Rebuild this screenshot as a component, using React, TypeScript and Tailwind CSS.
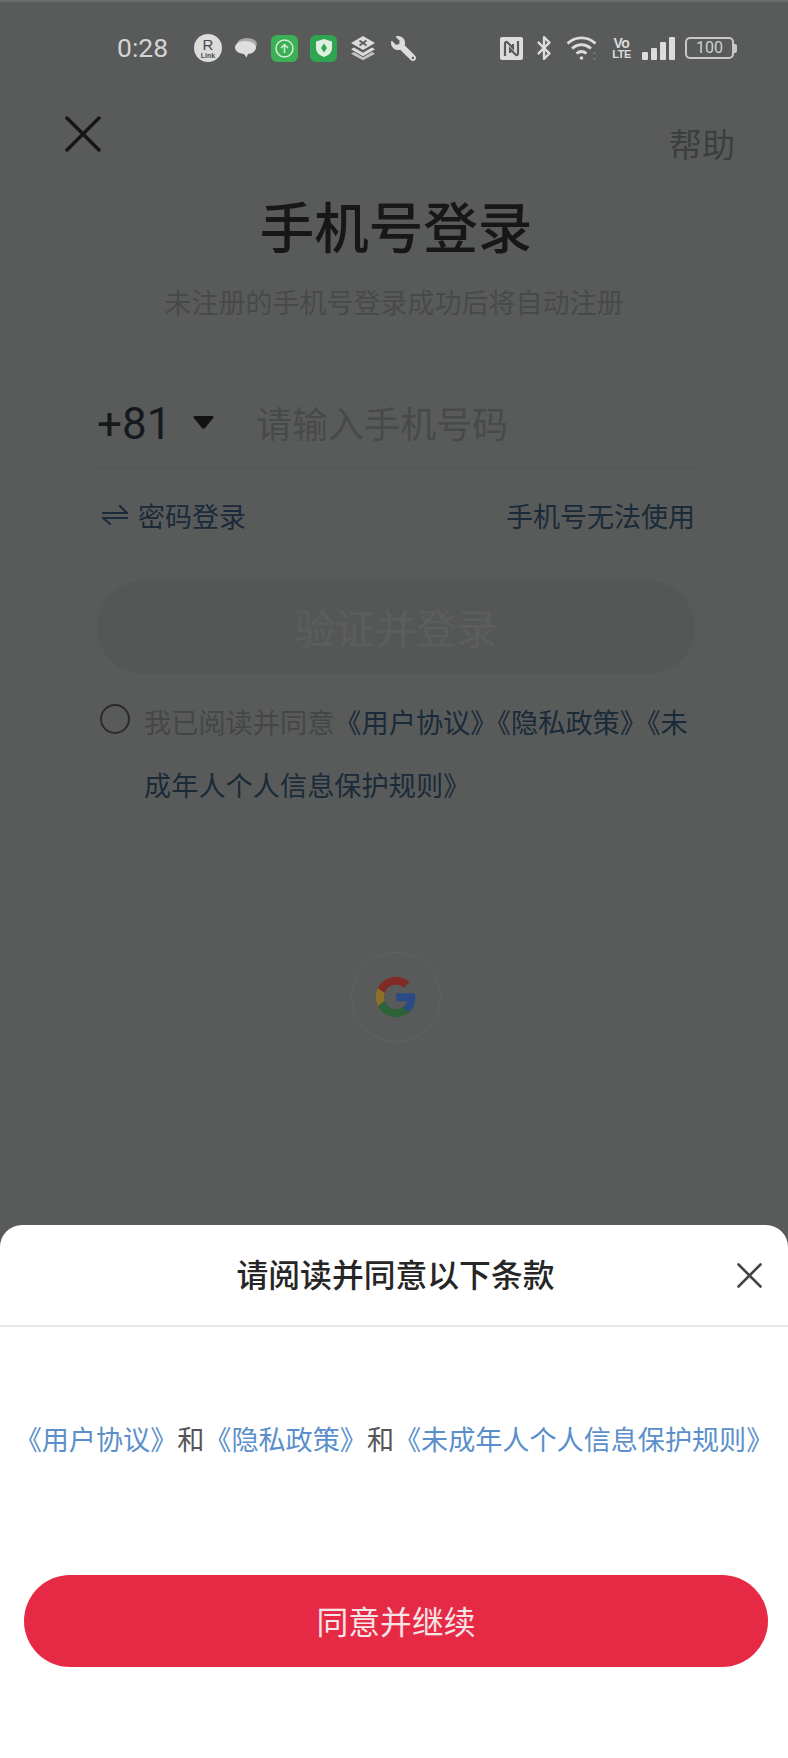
import React from 'react';
import { FaWrench } from 'react-icons/fa';
import { Bluetooth } from 'lucide-react';

const font = "font-['Noto_Sans_CJK_SC','Noto_Sans',sans-serif]";

function StatusLeft() {
  return (
    <div className="flex items-center">
      <span className="font-['Roboto',sans-serif] text-[26.500px] leading-none text-[#d4d4d4] w-[53px] ml-[117px]">0:28</span>
      <div className="relative w-[28px] h-[28px] ml-[24px] rounded-full bg-[#dcdcdc] flex flex-col items-center justify-center text-[#4a4a4a] font-['Liberation_Sans',sans-serif]">
        <span className="text-[15px] leading-[14px] font-normal">R</span>
        <span className="text-[7px] leading-[7px] font-bold">Link</span>
      </div>
      <svg className="ml-[12px]" width="24" height="22" viewBox="0 0 24 22">
        <ellipse cx="13" cy="7" rx="10" ry="6" fill="#a8a8a8" />
        <path d="M11 4c6 0 11 2.800 11 6.500S17.500 17 14 17l-1.500 3.500L10 17C5 16.500 1 14 1 10.500S5 4 11 4z" fill="#dedede" />
      </svg>
      <div className="w-[27px] h-[27px] ml-[13px] rounded-[6px] bg-[#3cb054] flex items-center justify-center">
        <svg width="19" height="19" viewBox="0 0 19 19" fill="none" stroke="#d5ecd9" strokeWidth="1.500">
          <circle cx="9.500" cy="9.500" r="8.500" />
          <path d="M9.500 14V5.500M6 9l3.500-3.500L13 9" />
        </svg>
      </div>
      <div className="w-[27px] h-[27px] ml-[12px] rounded-[6px] bg-[#2fa552] flex items-center justify-center">
        <svg width="18" height="20" viewBox="0 0 18 20">
          <path d="M9 1l8 2.500v6.500c0 4.500-3.500 7.500-8 9-4.500-1.500-8-4.500-8-9V3.500z" fill="#dff0e3" />
          <path d="M9 5.500l3 4.500-3 4.500L6 10z" fill="#2fa552" />
        </svg>
      </div>
      <svg className="ml-[13px]" width="26" height="26" viewBox="0 0 26 26">
        <path d="M13 1l12 7-12 7L1 8z" fill="#dcdcdc" />
        <path d="M9.500 5.500l7 5M16.500 5.500l-7 5" stroke="#595b5a" strokeWidth="1.800" />
        <path d="M4 12.500l9 5.200 9-5.200 3 1.800-12 7-12-7z" fill="#dcdcdc" />
        <path d="M4 17l9 5.200 9-5.200 3 1.800-12 6.500-12-6.500z" fill="#c4c4c4" />
      </svg>
      <FaWrench className="ml-[15px] text-[#dcdcdc] scale-x-[-1]" size={25} />
    </div>
  );
}

function StatusRight() {
  return (
    <div className="flex items-center">
      <svg width="23" height="23" viewBox="0 0 23 23">
        <rect width="23" height="23" rx="2" fill="#dcdcdc" />
        <path d="M5 19V6.500c0-1.500 1.500-2 2.500-1L13 11v-4M18 4v12.500c0 1.500-1.500 2-2.500 1L10 12v4" fill="none" stroke="#595b5a" strokeWidth="2.200" />
      </svg>
      <Bluetooth className="ml-[8px] text-[#dcdcdc]" size={26} strokeWidth={2.200} />
      <svg className="ml-[8px]" width="35" height="27" viewBox="0 0 34 27" fill="none" stroke="#dcdcdc" strokeWidth="2.800">
        <path d="M2 8.500C10 1 22 1 30 8.500" />
        <path d="M6.500 13.500c6-5 13-5 19 0" />
        <path d="M11 18.500c3.500-2.800 6.500-2.800 10 0" />
        <circle cx="16" cy="23" r="1.800" fill="#dcdcdc" stroke="none" />
        <path d="M27 19l2-2 2 2zM27 23l2 2 2-2z" fill="#7a7a7a" stroke="none" />
      </svg>
      <div className="ml-[12px] w-[19px] flex flex-col items-center font-['Liberation_Sans',sans-serif] font-bold text-[#dcdcdc] leading-none">
        <span className="text-[14px] leading-[12px] tracking-[-0.5px]">Vo</span>
        <span className="text-[11px] leading-[11px] tracking-[-0.5px]">LTE</span>
      </div>
      <div className="ml-[11px] flex items-end gap-[3px] h-[24px]">
        <div className="w-[6px] h-[8px] rounded-[1px] bg-[#dcdcdc]" />
        <div className="w-[6px] h-[12px] rounded-[1px] bg-[#dcdcdc]" />
        <div className="w-[6px] h-[18px] rounded-[1px] bg-[#dcdcdc]" />
        <div className="w-[6px] h-[23px] rounded-[1px] bg-[#dcdcdc]" />
      </div>
      <div className="ml-[10px] flex items-center">
        <div className="w-[49px] h-[22px] rounded-[5px] border-2 border-[#c8c8c8] flex items-center justify-center font-['Roboto',sans-serif] text-[16px] leading-none text-[#cfcfcf]">
          100
        </div>
        <div className="w-[3px] h-[9px] rounded-r-[2px] bg-[#c8c8c8]" />
      </div>
    </div>
  );
}

function GoogleG() {
  return (
    <svg width="44" height="44" viewBox="0 0 48 48">
      <path d="M45.120 24.500c0-1.560-.14-3.060-.4-4.500H24v8.510h11.840c-.51 2.750-2.060 5.080-4.390 6.640v5.520h7.110c4.160-3.830 6.560-9.470 6.560-16.170z" fill="#2a4b85" />
      <path d="M24 46c5.940 0 10.920-1.970 14.560-5.330l-7.110-5.520c-1.970 1.320-4.490 2.100-7.450 2.100-5.730 0-10.580-3.870-12.310-9.070H4.340v5.700C7.960 41.070 15.400 46 24 46z" fill="#2b6238" />
      <path d="M11.690 28.180C11.250 26.860 11 25.450 11 24s.25-2.860.69-4.180v-5.700H4.340C2.850 17.090 2 20.450 2 24c0 3.550.85 6.910 2.340 9.880l7.350-5.700z" fill="#8c7028" />
      <path d="M24 10.750c3.230 0 6.130 1.110 8.410 3.290l6.310-6.310C34.910 4.180 29.930 2 24 2 15.400 2 7.960 6.930 4.340 14.120l7.350 5.700c1.730-5.200 6.580-9.070 12.310-9.070z" fill="#812b26" />
    </svg>
  );
}

export default function App() {
  return (
    <div className={`relative w-[788px] h-[1758px] overflow-hidden bg-[#595b5a] border-t-2 border-[#6a6c6b] ${font}`}>
      <div className="h-[92px] flex items-center justify-between pr-[51px]">
        <StatusLeft />
        <StatusRight />
      </div>

      <div className="h-[98px] flex items-center justify-between pl-[65px] pr-[53px]">
        <svg className="mb-[18px]" width="36" height="36" viewBox="0 0 36 36" fill="none" stroke="#161616" strokeWidth="3.400" strokeLinecap="round">
          <path d="M2 2l32 32M34 2L2 34" />
        </svg>
        <span className="text-[33px] leading-none text-[#3d3f3e]">帮助</span>
      </div>

      <h1 className="h-[70px] pb-[4px] pl-[4px] flex items-center justify-center text-[54.500px] leading-none font-medium text-[#171717]">手机号登录</h1>
      <p className="h-[78px] flex items-center justify-center text-[27px] leading-none text-[#484a49]">未注册的手机号登录成功后将自动注册</p>

      <div className="pl-[97px] pr-[93px] mt-[44px]">
        <div className="h-[84px] flex items-center border-b border-[#525453]">
          <span className="mb-[3px] font-['Roboto',sans-serif] text-[44px] leading-none text-[#161a1c] w-[75px]">+81</span>
          <svg className="ml-[21px] mb-[6px]" width="21" height="13" viewBox="0 0 21 13">
            <path d="M2 0h17c1.500 0 2 1.200 1 2.300l-8 9.800c-.8 1-2.200 1-3 0L1 2.300C0 1.200.5 0 2 0z" fill="#121212" />
          </svg>
          <span className="ml-[42px] mb-[7px] text-[36px] leading-none text-[#484a49]">请输入手机号码</span>
        </div>

        <div className="h-[98px] pb-[4px] flex items-center justify-between text-[27px] leading-none text-[#1b2a39]">
          <div className="flex items-center">
            <svg className="ml-[5px]" width="26" height="22" viewBox="0 0 26 22" fill="none" stroke="#1b2a39" strokeWidth="2.200" strokeLinecap="round" strokeLinejoin="round">
              <path d="M1 9h24L18 2" />
              <path d="M25 14H1l7 6" />
            </svg>
            <span className="ml-[10px]">密码登录</span>
          </div>
          <span>手机号无法使用</span>
        </div>

        <button className="mt-[15px] w-full h-[93px] rounded-full bg-[#555756] text-[40.500px] leading-none text-[#5c5e5d]">验证并登录</button>

        <div className="mt-[16px] flex items-start pl-[3px] text-[27.200px] leading-[63px] text-[#1b2a39]">
          <div className="mt-[14px] w-[30px] h-[30px] shrink-0 rounded-full border-2 border-[#2b2b2b]" />
          <p className="ml-[14px] w-[556px]">
            <span className="text-[#454746]">我已阅读并同意</span>《用户协议》《隐私政策》《未成年人个人信息保护规则》
          </p>
        </div>

        <div className="mt-[136px] mx-auto w-[90px] h-[90px] rounded-full border border-[#616362] flex items-center justify-center">
          <GoogleG />
        </div>
      </div>

      <div className="absolute left-0 right-0 bottom-0 h-[533px] rounded-t-[22px] bg-white">
        <div className="relative h-[102px] pb-[2px] pl-[3px] flex items-center justify-center border-b-2 border-[#e8e8e8]">
          <span className="text-[31.800px] leading-none font-medium text-[#262626]">请阅读并同意以下条款</span>
          <svg className="absolute right-[26px] top-[38px]" width="25" height="25" viewBox="0 0 25 25" fill="none" stroke="#444444" strokeWidth="2.600" strokeLinecap="round">
            <path d="M1.500 1.500l22 22M23.500 1.500l-22 22" />
          </svg>
        </div>

        <p className="h-[228px] pb-[4px] flex items-center justify-center text-[27.100px] leading-none text-[#5a8fcb] whitespace-nowrap">
          <span>《用户协议》</span>
          <span className="text-[#555555]">和</span>
          <span>《隐私政策》</span>
          <span className="text-[#555555]">和</span>
          <span>《未成年人个人信息保护规则》</span>
        </p>

        <div className="pl-[24px] pr-[20px] mt-[20px]">
          <button className="w-full h-[92px] rounded-full bg-[#e62a45] text-[31.800px] leading-none text-[#f7e4e6]">同意并继续</button>
        </div>
      </div>
    </div>
  );
}
